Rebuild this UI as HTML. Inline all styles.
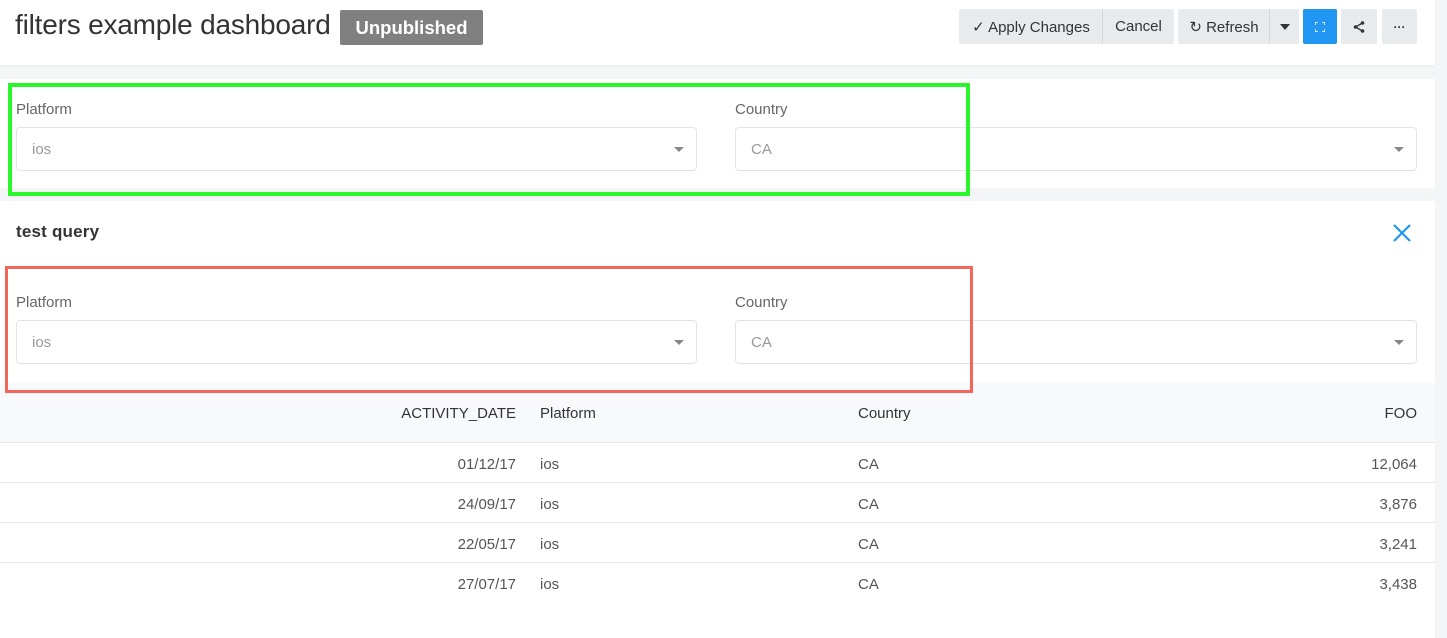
<!DOCTYPE html>
<html><head><style>
*{box-sizing:border-box;margin:0;padding:0}
body{width:1447px;height:638px;overflow:hidden;background:#f4f5f7;font-family:"Liberation Sans",sans-serif;color:#333;position:relative}
.abs{position:absolute}
.card{background:#fff;position:absolute;left:0;width:1435px}
.btn{position:absolute;top:9px;height:35px;background:#e8ebee;border-radius:2px;font-size:15px;color:#333;display:flex;align-items:center;justify-content:center}
.lbl{position:absolute;font-size:15px;color:#666}
.sel{position:absolute;height:44px;border:1px solid #e3e3e3;border-radius:4px;background:#fff;font-size:15px;color:#999;padding:13px 15px}
.sel:after{content:"";position:absolute;right:12px;top:19px;border:5px solid transparent;border-top:5px solid #888}
.th,.td{position:absolute;font-size:15px}
.th{color:#333}
.td{color:#555}
.line{position:absolute;left:0;width:1435px;height:1px;background:#e8e8e8}
</style></head><body>
<div class="card" style="top:0;height:65px;box-shadow:0 1px 3px rgba(0,0,0,.05)"></div>
<div class="abs" style="left:15px;top:9px;font-size:28px;letter-spacing:-0.2px;color:#333">filters example dashboard</div>
<div class="abs" style="left:340px;top:10px;width:143px;height:35px;background:#808080;border-radius:2px;color:#fff;font-weight:bold;font-size:18.5px;line-height:35px;text-align:center">Unpublished</div>
<div class="btn" style="left:959px;width:144px">✓ Apply Changes</div>
<div class="abs" style="left:1102px;top:9px;width:1px;height:35px;background:#d5d8db"></div>
<div class="btn" style="left:1103px;width:71px">Cancel</div>
<div class="btn" style="left:1178px;width:92px">↻ Refresh</div>
<div class="abs" style="left:1269px;top:9px;width:1px;height:35px;background:#d5d8db"></div>
<div class="btn" style="left:1270px;width:29px"><span style="border:5px solid transparent;border-top:6px solid #333;margin-top:6px"></span></div>
<div class="btn" style="left:1303px;width:34px;background:#2196f3"><svg width="10" height="10"><path d="M0 3V0H3M7 0H10V3M10 7V10H7M3 10H0V7" stroke="#fff" stroke-width="1.5" fill="none"/></svg></div>
<div class="btn" style="left:1341px;width:36px"><svg width="12" height="12"><circle cx="9.5" cy="2" r="1.8" fill="#333"/><circle cx="2.5" cy="6" r="1.8" fill="#333"/><circle cx="9.5" cy="10" r="1.8" fill="#333"/><path d="M9.5 2L2.5 6L9.5 10" stroke="#333" stroke-width="1.3" fill="none"/></svg></div>
<div class="btn" style="left:1382px;width:35px;font-size:12px;font-weight:bold">···</div>

<div class="card" style="top:79px;height:109px"></div>
<div class="lbl" style="left:16px;top:101px">Platform</div>
<div class="sel" style="left:16px;top:127px;width:681px">ios</div>
<div class="lbl" style="left:735px;top:101px">Country</div>
<div class="sel" style="left:735px;top:127px;width:682px">CA</div>
<div class="abs" style="left:8px;top:83px;width:962px;height:113px;border:4px solid #2bf52b"></div>

<div class="card" style="top:201px;height:437px"></div>
<div class="abs" style="left:16px;top:222px;font-size:17px;font-weight:bold;color:#333;letter-spacing:0.2px;-webkit-text-stroke:0">test query</div>
<svg class="abs" style="left:1393px;top:224px" width="18" height="18"><path d="M1 1L17 17M17 1L1 17" stroke="#2196f3" stroke-width="2.2"/></svg>
<div class="lbl" style="left:16px;top:294px">Platform</div>
<div class="sel" style="left:16px;top:320px;width:681px">ios</div>
<div class="lbl" style="left:735px;top:294px">Country</div>
<div class="sel" style="left:735px;top:320px;width:682px">CA</div>

<div class="abs" style="left:0;top:383px;width:1435px;height:59px;background:#f8f9fb"></div>
<div class="line" style="top:442px"></div>
<div class="th" style="right:931px;top:405px">ACTIVITY_DATE</div>
<div class="th" style="left:540px;top:405px">Platform</div>
<div class="th" style="left:858px;top:405px">Country</div>
<div class="th" style="right:30px;top:405px">FOO</div>

<div class="td" style="right:931px;top:456px">01/12/17</div><div class="td" style="left:540px;top:456px">ios</div><div class="td" style="left:858px;top:456px">CA</div><div class="td" style="right:30px;top:456px">12,064</div>
<div class="line" style="top:482px"></div>
<div class="td" style="right:931px;top:496px">24/09/17</div><div class="td" style="left:540px;top:496px">ios</div><div class="td" style="left:858px;top:496px">CA</div><div class="td" style="right:30px;top:496px">3,876</div>
<div class="line" style="top:522px"></div>
<div class="td" style="right:931px;top:536px">22/05/17</div><div class="td" style="left:540px;top:536px">ios</div><div class="td" style="left:858px;top:536px">CA</div><div class="td" style="right:30px;top:536px">3,241</div>
<div class="line" style="top:562px"></div>
<div class="td" style="right:931px;top:576px">27/07/17</div><div class="td" style="left:540px;top:576px">ios</div><div class="td" style="left:858px;top:576px">CA</div><div class="td" style="right:30px;top:576px">3,438</div>

<div class="abs" style="left:5px;top:266px;width:968px;height:127px;border:3px solid #f4665a"></div>
</body></html>
